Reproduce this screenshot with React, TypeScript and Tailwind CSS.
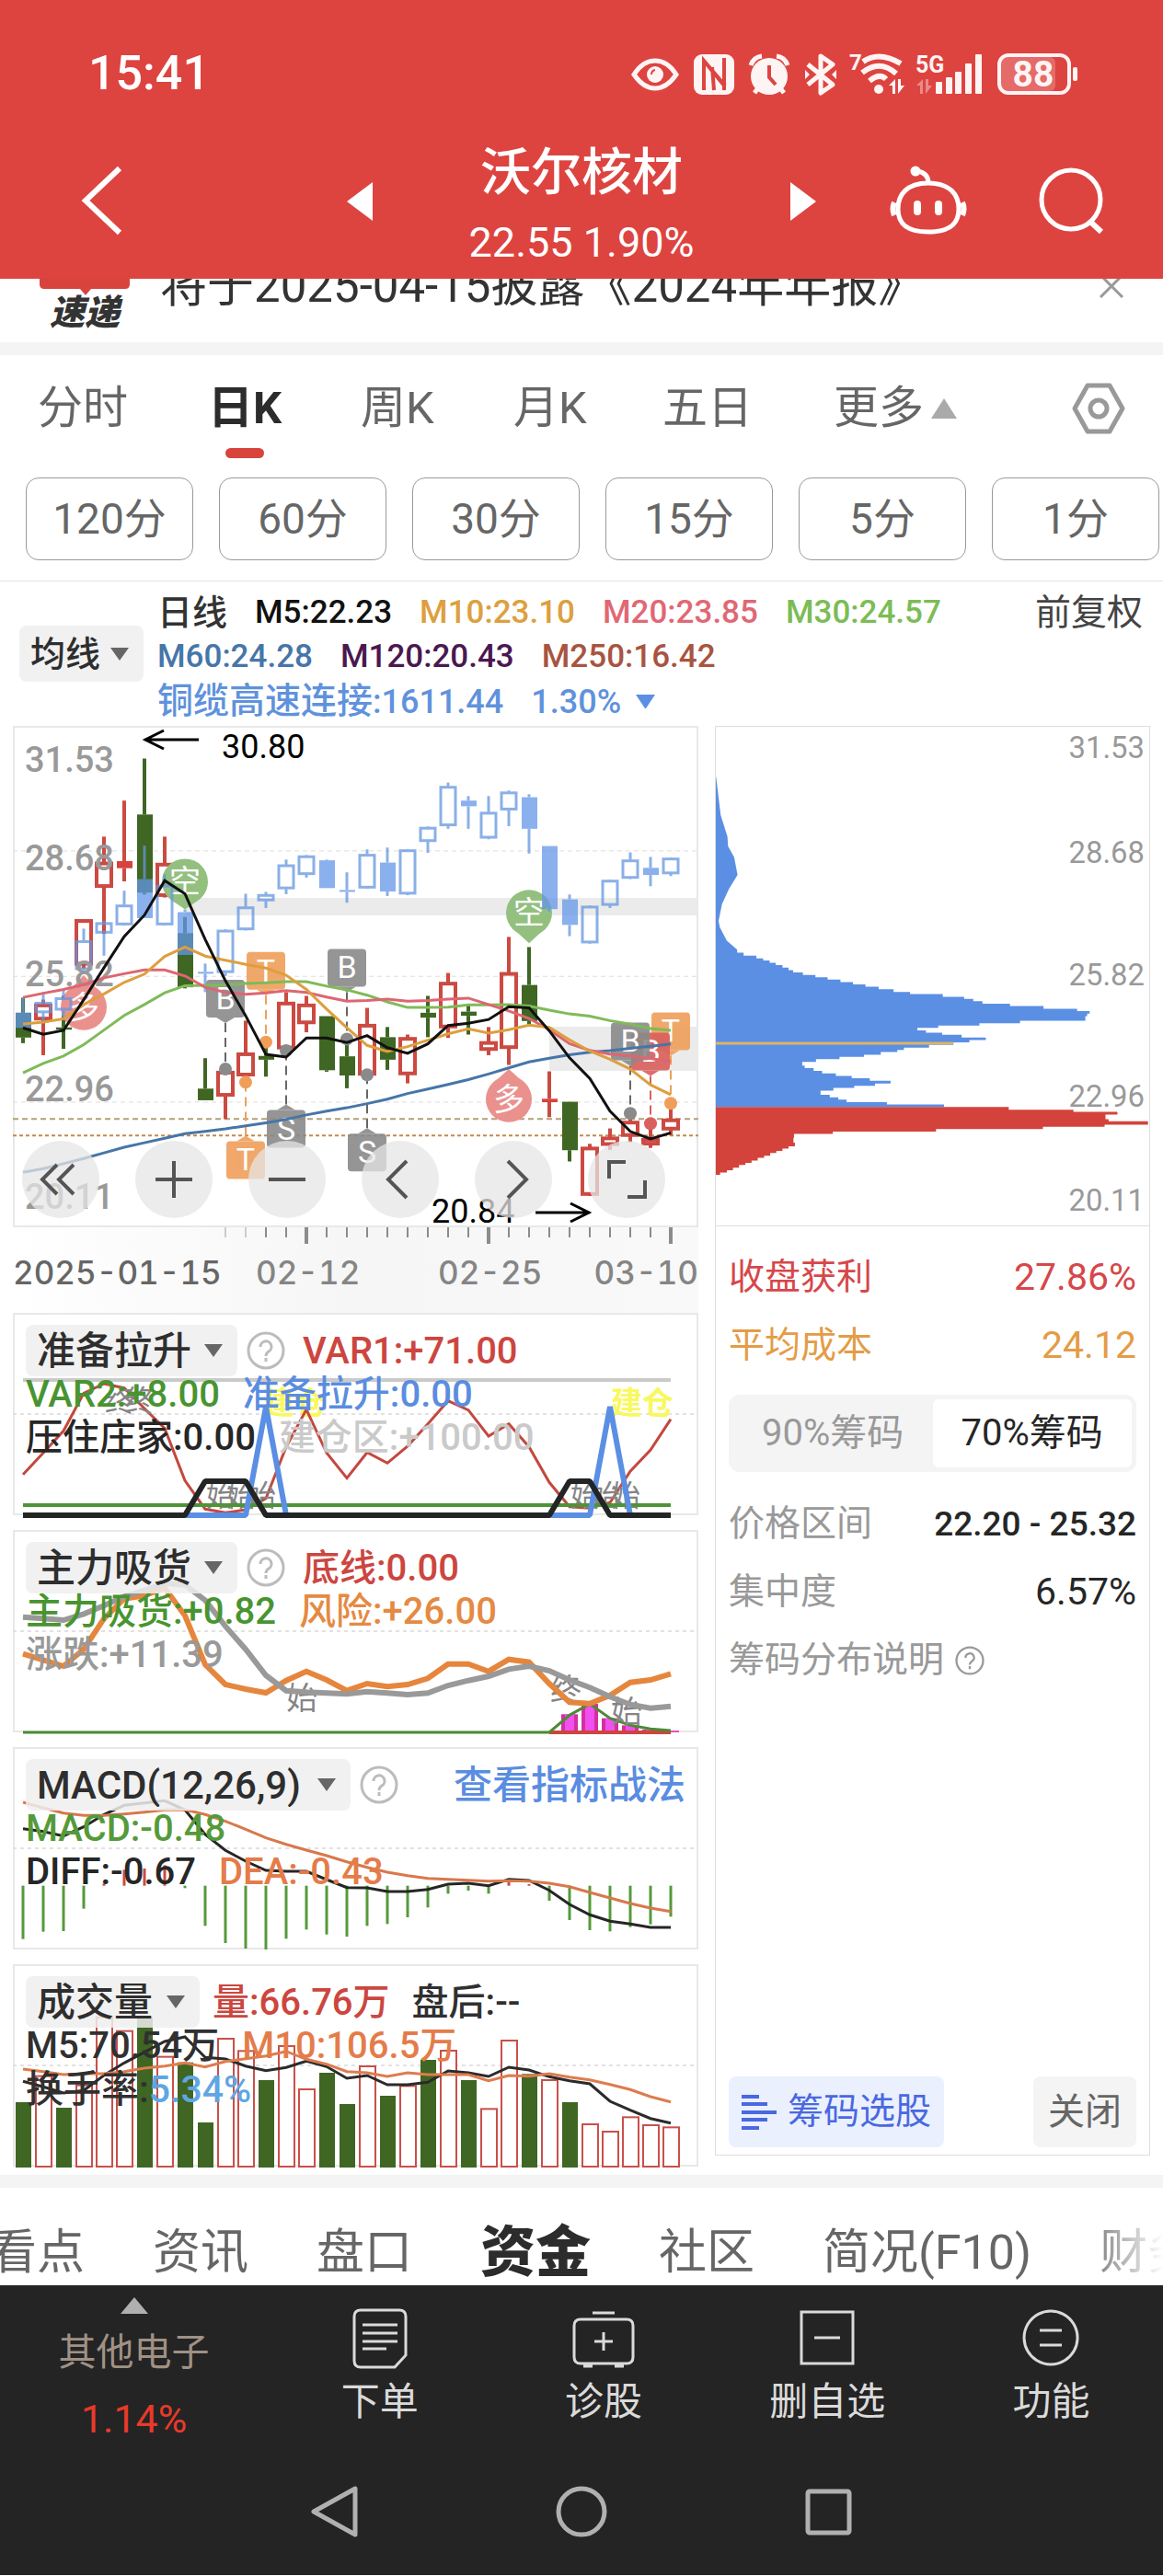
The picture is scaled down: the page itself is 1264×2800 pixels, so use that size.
import React from "react";

type Pt = number[];

const STEP = 22;
const X0 = 11;
const cx = (i: number) => X0 + i * STEP;

/* Samples of the price chart are stored at 2.45 units per pixel, those of the indicators at 3. */
const py = (v: number) => (v - 26) / 2.45;
const line = (vals: number[], y: (v: number) => number) =>
  vals.map((v, i) => `${cx(i)},${y(v).toFixed(1)}`).join(" ");

/* [index, high, top, bottom, low, kind] kind: 0 hollow, 1 filled down, 2 filled up */
const STOCK: Pt[] = [
  [0, 750, 790, 856, 871, 1], [1, 755, 768, 808, 903, 0], [2, 745, 829, 835, 886, 1], [3, 541, 543, 662, 672, 0],
  [4, 321, 390, 455, 580, 0], [5, 225, 386, 405, 440, 2], [6, 113, 262, 470, 475, 1], [7, 321, 393, 479, 483, 0],
  [8, 535, 578, 722, 725, 1], [9, 911, 992, 1023, 1023, 1], [10, 942, 947, 1011, 1073, 0], [11, 811, 898, 957, 978, 0],
  [12, 870, 905, 915, 960, 1], [13, 735, 763, 885, 893, 0], [14, 745, 768, 818, 842, 0], [15, 799, 799, 943, 947, 1],
  [16, 870, 906, 957, 991, 1], [17, 777, 822, 955, 957, 0], [18, 828, 855, 915, 942, 1], [19, 848, 857, 954, 978, 0],
  [20, 745, 790, 803, 855, 1], [21, 684, 710, 829, 857, 0], [22, 770, 787, 798, 848, 1], [23, 828, 868, 889, 903, 0],
  [24, 588, 684, 884, 929, 0], [25, 615, 716, 812, 820, 1], [26, 946, 1019, 1028, 1068, 2], [27, 1027, 1027, 1156, 1186, 1],
  [28, 1139, 1149, 1275, 1278, 0], [29, 1098, 1122, 1142, 1155, 0], [30, 1060, 1080, 1118, 1135, 0],
  [31, 1088, 1126, 1141, 1150, 0], [32, 1035, 1074, 1101, 1116, 0],
];
const SECTOR: Pt[] = [
  [0, 750, 790, 830, 830, 1], [1, 735, 762, 790, 812, 0], [2, 728, 750, 783, 802, 0], [3, 566, 598, 675, 680, 0],
  [4, 545, 550, 578, 638, 0], [5, 465, 503, 556, 558, 0], [6, 345, 434, 538, 538, 1], [7, 421, 450, 556, 558, 0],
  [8, 515, 522, 636, 636, 1], [9, 659, 681, 686, 735, 1], [10, 568, 570, 683, 692, 0], [11, 473, 508, 569, 571, 0],
  [12, 468, 475, 492, 511, 0], [13, 382, 396, 460, 474, 0], [14, 370, 372, 422, 430, 0], [15, 382, 384, 458, 458, 1],
  [16, 416, 463, 468, 497, 1], [17, 355, 368, 458, 460, 0], [18, 350, 390, 467, 479, 1], [19, 354, 356, 474, 477, 0],
  [20, 294, 296, 334, 364, 0], [21, 177, 187, 292, 300, 0], [22, 213, 225, 240, 300, 1], [23, 213, 256, 325, 328, 0],
  [24, 198, 202, 250, 293, 0], [25, 208, 216, 300, 366, 1], [26, 346, 346, 514, 520, 1], [27, 475, 488, 556, 586, 1],
  [28, 504, 506, 604, 606, 0], [29, 435, 437, 504, 511, 0], [30, 363, 383, 432, 434, 0], [31, 375, 404, 423, 453, 1],
  [32, 376, 378, 420, 426, 0],
];
const MA5 = [830, 847, 837, 755, 670, 587, 530, 438, 473, 595, 705, 798, 901, 908, 857, 857, 869, 851, 883, 898, 873, 824, 818, 808, 774, 777, 838, 910, 965, 1052, 1106, 1126, 1110];
const MA10 = [820, 815, 806, 768, 740, 709, 687, 640, 615, 639, 650, 661, 671, 690, 728, 780, 830, 877, 893, 880, 863, 846, 833, 844, 835, 823, 829, 862, 892, 914, 940, 982, 1008];
const MA20 = [749, 738, 728, 715, 697, 686, 676, 676, 692, 722, 736, 741, 737, 731, 736, 748, 759, 757, 754, 759, 757, 754, 751, 768, 785, 805, 835, 872, 890, 900, 905, 912, 920];
const MA30 = [950, 925, 905, 875, 836, 797, 768, 737, 718, 717, 716, 712, 710, 707, 707, 719, 729, 743, 761, 776, 776, 775, 769, 769, 768, 772, 783, 793, 799, 811, 820, 832, 837];
const MA60 = [1215, 1205, 1192, 1178, 1163, 1148, 1136, 1124, 1112, 1106, 1099, 1091, 1083, 1074, 1062, 1052, 1043, 1032, 1020, 1005, 993, 981, 968, 953, 937, 921, 911, 902, 895, 891, 885, 879, 873];

function Candle({ d, color, fill, w }: { d: Pt; color: string; fill: string; w: number }) {
  const [i, hi, top, bot, lo, kind] = d;
  const x = cx(i);
  return (
    <g stroke={color} strokeWidth={w}>
      {hi < top && <line x1={x} x2={x} y1={py(hi)} y2={py(top)} />}
      {lo > bot && <line x1={x} x2={x} y1={py(bot)} y2={py(lo)} />}
      {kind === 0 ? (
        <rect x={x - 8} y={py(top) + 1} width={16} height={Math.max(3, py(bot) - py(top) - 2)} fill="none" />
      ) : (
        <rect x={x - 8} y={py(top)} width={17} height={Math.max(2, py(bot) - py(top))} fill={fill} stroke="none" />
      )}
    </g>
  );
}

function Marker({ i, label, box, dot, color }: { i: number; label: string; box: number; dot: number; color: string }) {
  const x = cx(i);
  const above = box < dot;
  const yb = py(box);
  const edge = above ? yb + 41 : yb;
  const tip = above ? edge + 6 : edge - 6;
  return (
    <g>
      <line x1={x} x2={x} y1={tip} y2={py(dot)} stroke={color === "#8a8a8a" ? "#666" : color} strokeWidth={2} strokeDasharray="10 6" />
      <circle cx={x} cy={py(dot)} r={7} fill={color} />
      <g opacity={0.9}>
        <rect x={x - 21} y={yb} width={42} height={41} rx={4} fill={color} />
        <path d={`M${x - 10} ${edge}L${x} ${tip}L${x + 10} ${edge}Z`} fill={color} />
      </g>
      <text x={x} y={yb + 32} fontSize={34} fill="#fff" textAnchor="middle">{label}</text>
    </g>
  );
}

function Balloon({ i, y, tip, label, color }: { i: number; y: number; tip: number; label: string; color: string }) {
  const x = cx(i);
  const c = py(y);
  const t = py(tip);
  const s = t > c ? 1 : -1;
  return (
    <g>
      <circle cx={x} cy={c} r={25} fill={color} />
      <path d={`M${x - 13} ${c + s * 21}L${x} ${t}L${x + 13} ${c + s * 21}Z`} fill={color} />
      <text x={x} y={c + 12} fontSize={34} fill="#fff" textAnchor="middle">{label}</text>
    </g>
  );
}

const PRICES: [string, number][] = [["31.53", 113], ["28.68", 377], ["25.82", 685], ["22.96", 992], ["20.11", 1277]];
const GRAY = "#8a8a8a";
const ORANGE = "#ef9f5a";
const RED = "#cb4a42";

function PriceChart() {
  return (
    <svg viewBox="0 0 745 545" className="block h-auto w-full">
      <rect x={1} y={1} width={743} height={543} fill="#fff" stroke="#e8e8e8" strokeWidth={2} />
      <rect x={188} y={py(484)} width={556} height={19} fill="#ebebeb" />
      <rect x={583} y={py(827)} width={161} height={48} fill="#ebebeb" />
      {[359, 693, 1028].map((v) => (
        <line key={v} x1={0} x2={745} y1={py(v)} y2={py(v)} stroke="#dedede" strokeDasharray="5 4" />
      ))}
      <line x1={0} x2={745} y1={py(1073)} y2={py(1073)} stroke="#b3a076" strokeWidth={2} strokeDasharray="6 4" />
      <line x1={0} x2={745} y1={py(1117)} y2={py(1117)} stroke="#c08a50" strokeWidth={2} strokeDasharray="4 3" />
      {STOCK.map((d) => (
        <Candle key={d[0]} d={d} w={4} color={d[5] === 1 ? "#3f6622" : RED} fill={d[5] === 1 ? "#3f6622" : "#d8423c"} />
      ))}
      <Balloon i={8} y={441} tip={515} label="空" color="#93c07f" />
      <Balloon i={25} y={524} tip={605} label="空" color="#93c07f" />
      <Balloon i={3} y={775} tip={690} label="多" color="#ea918e" />
      <Balloon i={24} y={1020} tip={940} label="多" color="#ea918e" />
      <g opacity={0.75}>
        {SECTOR.map((d) => <Candle key={d[0]} d={d} w={3} color="#6496e0" fill="#6496e8" />)}
      </g>
      <Marker i={10} label="B" box={702} dot={940} color={GRAY} />
      <Marker i={12} label="T" box={628} dot={868} color={ORANGE} />
      <Marker i={13} label="S" box={1049} dot={891} color={GRAY} />
      <Marker i={11} label="T" box={1132} dot={975} color={ORANGE} />
      <Marker i={16} label="B" box={620} dot={860} color={GRAY} />
      <Marker i={17} label="S" box={1112} dot={955} color={GRAY} />
      <Marker i={32} label="T" box={789} dot={1031} color={ORANGE} />
      <Marker i={31} label="B" box={843} dot={1085} color="#d9605c" />
      <Marker i={30} label="B" box={816} dot={1058} color={GRAY} />
      <g fontSize={38} fontWeight={500} fill="#999">
        {PRICES.map(([t, v]) => <text key={t} x={13} y={py(v) + 14}>{t}</text>)}
      </g>
      <g fill="none" strokeWidth={3}>
        <polyline points={line(MA60, py)} stroke="#4676a8" />
        <polyline points={line(MA30, py)} stroke="#7fbb58" />
        <polyline points={line(MA20, py)} stroke="#dd6672" />
        <polyline points={line(MA10, py)} stroke="#dd9f3e" />
        <polyline points={line(MA5, py)} stroke="#111" />
      </g>
      <g stroke="#000" strokeWidth={3} fill="none">
        <path d="M202 15H143M164 5L144 15L164 25" />
        <path d="M568 529H627M606 519L626 529L606 539" />
      </g>
      <g fontSize={36} fill="#000">
        <text x={227} y={35}>30.80</text>
        <text x={455} y={540}>20.84</text>
      </g>
    </svg>
  );
}

function ChartControls() {
  const items: [string, React.ReactNode][] = [
    ["快退", <path key="a" d="M38 26L22 42L38 58M56 26L40 42L56 58" />],
    ["放大", <path key="b" d="M42 22V62M22 42H62" />],
    ["缩小", <path key="c" d="M22 42H62" />],
    ["左移", <path key="d" d="M49 22L29 42L49 62" />],
    ["右移", <path key="e" d="M36 22L56 42L36 62" />],
    ["全屏", <path key="f" d="M23 41V23H41M62 43V61H43" />],
  ];
  return (
    <div className="absolute right-0 bottom-[10px] left-[10px] flex gap-[39px]">
      {items.map(([name, icon]) => (
        <button key={name} aria-label={name} className="size-[84px] rounded-full bg-[#e6e6e6]/75">
          <svg viewBox="0 0 84 84" fill="none" stroke="#555" strokeWidth={4} className="size-full">{icon}</svg>
        </button>
      ))}
    </div>
  );
}

function TimeAxis() {
  return (
    <div className="h-[93px] bg-linear-to-r from-white via-[#f6f6f6] to-[#f9f9f9]">
      <svg viewBox="0 0 745 18" className="block h-auto w-full">
        {Array.from({ length: 23 }, (_, k) => k + 10).map((i) => {
          const big = i === 14 || i === 23 || i === 32;
          return <line key={i} x1={cx(i)} x2={cx(i)} y1={0} y2={big ? 18 : 11} stroke={i < 12 ? "#ccc" : "#8c8c8c"} strokeWidth={big ? 4 : 2} />;
        })}
      </svg>
      <div className="flex [font-family:Inter,sans-serif] text-[35px] leading-[62px] font-medium whitespace-nowrap text-[#858585] tabular-nums">
        <span className="w-[264px] shrink-0 text-[#666]">2025-01-15</span>
        <span className="w-[198px] shrink-0">02-12</span>
        <span className="flex-1">02-25</span>
        <span>03-10</span>
      </div>
    </div>
  );
}

const DIST_TOP: Pt[] = [[53, 160], [68, 262], [90, 320], [92, 345], [112, 375], [123, 422], [95, 460], [72, 500], [61, 545], [65, 562], [88, 598], [122, 622]];
const DIST_MID: Pt[] = [[143, 630], [185, 638], [207, 645], [228, 651], [248, 657], [270, 663], [290, 670], [305, 677], [337, 683], [378, 690], [418, 696], [460, 702], [501, 709], [542, 715], [585, 721], [634, 728], [688, 735], [795, 741], [865, 748], [895, 754], [925, 760], [1015, 767], [1125, 773], [1235, 780], [1276, 786], [1268, 793], [1262, 800], [1262, 806], [1048, 812], [915, 819], [780, 825], [712, 831], [740, 838], [793, 844], [857, 850], [936, 857], [882, 864], [830, 870], [750, 877], [668, 884], [646, 890], [592, 896], [537, 903], [457, 909], [380, 915], [335, 922], [343, 932], [372, 939], [400, 946], [445, 953], [497, 960], [556, 966], [624, 973], [573, 980], [505, 986], [437, 992], [395, 999], [425, 1010], [453, 1017], [480, 1023], [612, 1030], [799, 1036]];
const DIST_RED: Pt[] = [[1011, 1043], [1223, 1050], [1367, 1056], [1328, 1063], [1338, 1075], [1467, 1081], [1325, 1090], [1123, 1096], [773, 1102], [435, 1109], [308, 1115], [306, 1125], [311, 1138], [290, 1148], [270, 1154], [250, 1160], [230, 1166], [210, 1173], [189, 1179], [169, 1186], [149, 1192], [128, 1198], [108, 1205], [88, 1212], [66, 1218]];
const dx = (v: number) => ((v - 52) / 3).toFixed(1);
const dy = (v: number) => py(v).toFixed(1);
const steps = (pts: Pt[]) => pts.map(([x, y]) => `V${dy(y)}H${dx(x)}`).join("");

function ChipChart() {
  return (
    <svg viewBox="0 0 473 544" className="block h-auto w-full">
      <path d={`M${DIST_TOP.map(([x, y]) => `${dx(x)} ${dy(y)}`).join("L")}${steps(DIST_MID)}V${dy(1043)}H0V${dy(160)}Z`} fill="#5a8fe4" />
      <path d={`M0 ${dy(1043)}${steps(DIST_RED)}V${dy(1224)}H0Z`} fill="#d3433b" />
      <rect x={0} y={344} width={259} height={3} fill="#dcb468" />
      <g fontSize={33} fill="#999" textAnchor="end">
        {PRICES.map(([t], k) => (
          <text key={t} x={468} y={py([81, 361, 687, 1012, 1292][k]) + 12}>{t}</text>
        ))}
      </g>
    </svg>
  );
}

function Help({ big }: { big?: boolean }) {
  return (
    <button aria-label="说明" className={big ? "size-[42px] shrink-0 text-[#bcbcbc]" : "size-[32px] shrink-0 text-[#999]"}>
      <svg viewBox="0 0 42 42" className="size-full" fill="none" stroke="currentColor" strokeWidth={3}>
        <circle cx={21} cy={21} r={19} />
        <path d="M15 17a6 6 0 1 1 9 5q-3 2-3 5M21 29v4" />
      </svg>
    </button>
  );
}

function Drop({ label, className }: { label: string; className: string }) {
  return (
    <div className={`relative flex shrink-0 items-center ${className}`}>
      <select aria-label={label} className="h-full w-full appearance-none rounded-lg bg-[#efefef]/85 pl-3 font-medium text-[#2e2e2e]">
        <option>{label}</option>
      </select>
      <svg viewBox="0 0 20 14" className="pointer-events-none absolute right-4 w-[20px]" fill="#666"><path d="M0 0H20L10 14Z" /></svg>
    </div>
  );
}

type Val = [string, string];
function Panel({ name, width, help, row1, rows, link, children }: {
  name: string; width: string; help?: boolean; row1: Val[]; rows: Val[][]; link?: string; children: React.ReactNode;
}) {
  return (
    <section className="grid">
      <svg viewBox="0 0 745 220" className="block h-auto w-full overflow-visible [grid-area:1/1]">
        <rect x={1} y={1} width={743} height={218} fill="#fff" stroke="#e8e8e8" strokeWidth={2} />
        <line x1={0} x2={745} y1={110} y2={110} stroke="#e2e2e2" strokeWidth={2} strokeDasharray="4 4" />
        {children}
      </svg>
      <div className="z-10 px-[14px] pt-[13px] text-[40px] leading-[47px] font-medium whitespace-nowrap [grid-area:1/1]">
        <div className="flex h-[56px] items-center gap-[10px]">
          <Drop label={name} className={`h-[56px] text-[42px] ${width}`} />
          {help && <Help big />}
          <div className={help ? "ml-[9px] flex gap-6" : "ml-1 flex gap-6"}>
            {row1.map(([t, c]) => <span key={t} className={c}>{t}</span>)}
          </div>
          {link && <a href="#guide" className="ml-auto text-[42px] text-[#5a8de0]">{link}</a>}
        </div>
        <div className="-mt-1">
          {rows.map((r, k) => (
            <div key={k} className="flex h-[47px] items-center gap-[25px]">
              {r.map(([t, c]) => <span key={t} className={c}>{t}</span>)}
            </div>
          ))}
        </div>
      </div>
    </section>
  );
}

const G = "text-[#489430]";
const K = "text-[#262626]";
const R = "text-[#cc463f]";

const y1 = (v: number) => (v - 53) / 3;
const y2 = (v: number) => (v - 761) / 3;
const y3 = (v: number) => (v - 60) / 3;
const y4 = (v: number) => (v - 768) / 3;

const VAR1 = [580, 510, 438, 315, 284, 298, 365, 430, 600, 693, 705, 695, 658, 490, 368, 510, 592, 508, 543, 488, 415, 340, 370, 455, 415, 490, 606, 685, 690, 672, 570, 500, 400];
const RISE = [1045, 1050, 1055, 1035, 1008, 978, 958, 935, 940, 990, 1075, 1150, 1235, 1285, 1290, 1293, 1296, 1288, 1293, 1298, 1293, 1268, 1252, 1238, 1215, 1205, 1220, 1250, 1275, 1305, 1330, 1342, 1336];
const RISK = [1165, 1185, 1205, 1150, 1050, 985, 975, 950, 1040, 1200, 1265, 1280, 1292, 1252, 1222, 1250, 1285, 1262, 1272, 1265, 1245, 1198, 1198, 1222, 1183, 1192, 1262, 1323, 1327, 1300, 1258, 1250, 1230];
const DIFF = [326, 335, 350, 320, 280, 250, 242, 235, 265, 345, 397, 432, 462, 465, 465, 492, 518, 519, 531, 531, 524, 507, 504, 512, 491, 495, 527, 573, 607, 628, 637, 648, 648];
const DEA = [240, 258, 275, 283, 283, 278, 272, 265, 264, 280, 302, 328, 356, 377, 396, 414, 434, 452, 468, 479, 488, 491, 494, 497, 496, 497, 504, 515, 534, 552, 570, 585, 596];
const HIST = [686, 662, 660, 587, 505, 460, 456, 445, 520, 643, 699, 717, 720, 685, 655, 671, 678, 643, 637, 615, 583, 538, 528, 538, 500, 507, 561, 624, 657, 661, 647, 638, 613];
const VOL = [-1218, 1130, -1236, 1160, 938, 983, -940, 1067, -1088, -1284, 1008, 1048, -1146, 1032, 1173, -1122, -1224, 1098, -1197, 1162, -1080, 1047, -1146, 1237, 1014, -1126, 1143, -1218, 1287, 1311, 1264, 1290, 1297];
const V5 = [1150, 1168, 1188, 1180, 1130, 1090, 1055, 1020, 1005, 1072, 1077, 1100, 1115, 1105, 1084, 1102, 1140, 1131, 1161, 1161, 1153, 1116, 1122, 1134, 1104, 1113, 1135, 1148, 1158, 1215, 1244, 1271, 1286];
const V10 = [1110, 1118, 1128, 1125, 1125, 1118, 1107, 1100, 1090, 1103, 1085, 1076, 1067, 1052, 1078, 1094, 1118, 1122, 1134, 1122, 1128, 1128, 1128, 1148, 1131, 1133, 1125, 1136, 1145, 1160, 1177, 1200, 1217];

function Indicators() {
  return (
    <div className="flex flex-col gap-4">
      <Panel name="准备拉升" width="w-[230px]" help row1={[["VAR1:+71.00", R]]}
        rows={[[["VAR2:+8.00", G], ["准备拉升:0.00", "text-[#5a8de0]"]], [["压住庄家:0.00", K], ["建仓区:+100.00", "text-[#cacaca]"]]]}>
        <line x1={11} x2={715} y1={73} y2={73} stroke="#cacaca" strokeWidth={4} />
        <g fontSize={34} fill="#f8f860" fontWeight={700}>
          <text x={272} y={110}>建仓</text><text x={650} y={110}>建仓</text>
        </g>
        <polyline points={line(VAR1, y1)} fill="none" stroke="#c4483f" strokeWidth={3} />
        <g fontSize={32} fill="#858585">
          <text x={100} y={107}>终</text><text x={122} y={107}>终</text>
          <text x={210} y={210}>始</text><text x={232} y={210}>始</text><text x={254} y={210}>始</text>
          <text x={606} y={210}>始</text><text x={628} y={210}>始</text><text x={650} y={210}>始</text>
        </g>
        <line x1={11} x2={715} y1={209} y2={209} stroke="#4d9438" strokeWidth={4} />
        <g fill="none" strokeWidth={6} strokeLinejoin="bevel">
          <path d="M11 220H253L275 102L297 220H627L649 102L671 220H715" stroke="#5a8fe4" />
          <path d="M11 220H187L209 183H253L275 220H583L605 183H627L649 220H715" stroke="#222426" />
        </g>
      </Panel>
      <Panel name="主力吸货" width="w-[230px]" help row1={[["底线:0.00", R]]}
        rows={[[["主力吸货:+0.82", G], ["风险:+26.00", "text-[#e48a42]"]], [["涨跌:+11.39", "text-[#999]"]]]}>
        {[[27, 1362], [28, 1328], [29, 1375], [30, 1398], [31, 1412]].map(([i, v]) => (
          <g key={i}>
            <rect x={cx(i) - 9} y={y2(v)} width={18} height={220 - y2(v)} fill="#d62ea0" />
            <rect x={cx(i) - 5} y={y2(v)} width={10} height={220 - y2(v)} fill="#f050f0" />
          </g>
        ))}
        <line x1={583} x2={715} y1={220} y2={220} stroke="#cc463f" strokeWidth={4} />
        <line x1={715} x2={724} y1={219} y2={219} stroke="#e050d0" strokeWidth={2} />
        <polyline points={`11,220 583,220 605,${y2(1365)} 627,${y2(1328)} 649,${y2(1375)} 671,${y2(1398)} 693,${y2(1410)} 715,${y2(1415)}`} fill="none" stroke="#4b8b35" strokeWidth={3} />
        <g fontSize={34} fill="#858585">
          <text x={297} y={195}>始</text><text x={584} y={186}>终</text><text x={650} y={210}>始</text>
        </g>
        <polyline points={line(RISK, y2)} fill="none" stroke="#e6863c" strokeWidth={6} />
        <polyline points={line(RISE, y2)} fill="none" stroke="#999" strokeWidth={6} />
      </Panel>
      <Panel name="MACD(12,26,9)" width="w-[353px]" help row1={[]} link="查看指标战法"
        rows={[[["MACD:-0.48", "text-[#559a3a]"]], [["DIFF:-0.67", K], ["DEA:-0.43", "text-[#e47c4a]"]]]}>
        {HIST.map((v, i) => (
          <line key={i} x1={cx(i)} x2={cx(i)} y1={y3(512)} y2={y3(v)} stroke={v < 512 ? RED : "#559a3a"} strokeWidth={3} />
        ))}
        <polyline points={line(DIFF, y3)} fill="none" stroke="#262626" strokeWidth={3} />
        <polyline points={line(DEA, y3)} fill="none" stroke="#d8784c" strokeWidth={3} />
      </Panel>
      <Panel name="成交量" width="w-[189px]" row1={[["量:66.76万", R], ["盘后:--", "text-[#303030]"]]}
        rows={[[["M5:70.54万", "text-[#303030]"], ["M10:106.5万", "text-[#e47c4a]"]]]}>
        {VOL.map((v, i) =>
          v < 0 ? (
            <rect key={i} x={cx(i) - 8} y={y4(-v)} width={17} height={221 - y4(-v)} fill="#3f6622" />
          ) : (
            <rect key={i} x={cx(i) - 8} y={y4(v) + 1} width={17} height={219 - y4(v)} fill="#fff" stroke="#c9504a" strokeWidth={2} />
          ),
        )}
        <polyline points={line(V5, y4)} fill="none" stroke="#2b2b2b" strokeWidth={3} />
        <polyline points={line(V10, y4)} fill="none" stroke="#de7c4e" strokeWidth={3} />
        <text x={14} y={150} fontSize={41} fontWeight={500} fill="#303030">换手率:<tspan fill="#5fa6e2">5.34%</tspan></text>
      </Panel>
    </div>
  );
}

function StatusIcons() {
  return (
    <svg viewBox="0 0 488 50" className="h-[50px] w-[488px]" fill="#fff4f4">
      <g fill="none" stroke="#fff4f4" strokeWidth={5}>
        <path d="M3 26C12 12 21 11 26 11S40 12 49 26C40 39 31 41 26 41S12 39 3 26Z" />
      </g>
      <circle cx={26} cy={26} r={9} />
      <path d="M22 26q0-4 4-5" stroke="#dd4440" strokeWidth={2} fill="none" />
      <rect x={68} y={4} width={44} height={44} rx={9} />
      <path d="M79 43V11L102 38M88 18L90 43M101 43V8M79 11l22 27" stroke="#dd4440" strokeWidth={4} fill="none" />
      <circle cx={150} cy={28} r={20} />
      <path d="M134 46l6-8M166 46l-6-8" stroke="#fff4f4" strokeWidth={5} />
      <path d="M130 16q3-9 12-10M158 6q9 1 12 10" stroke="#fff4f4" strokeWidth={5} fill="none" />
      <path d="M150 16v13l7 8" stroke="#dd4440" strokeWidth={4} fill="none" />
      <path d="M192 15L219 37L206 46V6L219 15L192 37" stroke="#fff4f4" strokeWidth={5} fill="none" strokeLinejoin="round" />
      <path d="M189 21l5 5l-5 5zM223 21l-5 5l5 5z" />
      <text x={237} y={21} fontSize={24} fontWeight={700}>7</text>
      <g fill="none" stroke="#fff4f4" strokeWidth={6}>
        <path d="M252 12Q269 0 293 14M251 24Q270 9 288 25M259 33Q270 24 277 31" />
      </g>
      <circle cx={269} cy={42} r={5} />
      <path d="M280 38l7-7v16h-3v-9zM290 31v16l7-9h-4v-7z" />
      <text x={309} y={24} fontSize={25} fontWeight={700}>5G</text>
      <path d="M310 38l7-7v16h-3v-9zM320 31v16l7-9h-4v-7z" opacity={0.4} />
      <rect x={331} y={34} width={7} height={13} rx={1} />
      <rect x={342} y={29} width={7} height={18} rx={1} />
      <rect x={352} y={23} width={7} height={24} rx={1} />
      <rect x={363} y={14} width={7} height={33} rx={1} />
      <rect x={374} y={4} width={7} height={43} rx={1} />
      <rect x={401} y={7} width={60} height={37} rx={6} opacity={0.22} />
      <rect x={400} y={5} width={76} height={41} rx={10} fill="none" stroke="#fff4f4" strokeWidth={4} />
      <rect x={480} y={18} width={5} height={15} rx={2} />
      <text x={437} y={39} fontSize={39} fontWeight={700} textAnchor="middle">88</text>
    </svg>
  );
}

function Header() {
  return (
    <header className="flex h-[303px] flex-col bg-[#dd4440] text-white">
      <div className="flex h-[160px] items-center justify-between pr-[90px] pl-[96px]">
        <span className="text-[52px] font-medium">15:41</span>
        <StatusIcons />
      </div>
      <div className="grid flex-1 grid-cols-[1fr_510px_1fr] items-start">
        <button aria-label="返回" className="mt-5 ml-[86px] justify-self-start">
          <svg viewBox="0 0 50 76" className="h-[76px] w-[50px]" fill="none" stroke="#fff" strokeWidth={6}><path d="M44 3L7 38L44 73" /></svg>
        </button>
        <div className="flex items-start justify-between">
          <button aria-label="上一只" className="mt-[38px]"><svg viewBox="0 0 28 42" className="h-[42px] w-[28px]" fill="#fff"><path d="M28 0V42L0 21Z" /></svg></button>
          <div className="-mt-2 text-center whitespace-nowrap">
            <h1 className="text-[55px] leading-[70px] font-medium">沃尔核材</h1>
            <p className="mt-[7px] text-[45px] leading-[70px]">22.55 1.90%</p>
          </div>
          <button aria-label="下一只" className="mt-[38px]"><svg viewBox="0 0 28 42" className="h-[42px] w-[28px]" fill="#fff"><path d="M0 0V42L28 21Z" /></svg></button>
        </div>
        <div className="mt-5 flex justify-end gap-[75px] pr-[62px]">
          <button aria-label="智能助手">
            <svg viewBox="0 0 84 76" className="h-[76px] w-[84px]" fill="none" stroke="#fff" strokeWidth={5}>
              <path d="M42 19C66 19 75 32 75 47S67 72 42 72S9 62 9 47S18 19 42 19ZM42 19Q42 8 30 6" />
              <path d="M5 40q-3 7 0 14M79 40q3 7 0 14" strokeWidth={6} />
              <path d="M30 42v8M53 42v8" strokeWidth={8} strokeLinecap="round" />
              <circle cx={28} cy={6} r={3} fill="#fff" />
            </svg>
          </button>
          <button aria-label="搜索">
            <svg viewBox="0 0 76 76" className="h-[76px] w-[76px]" fill="none" stroke="#fff" strokeWidth={5}>
              <circle cx={38} cy={37} r={32} /><path d="M58 60L71 72" strokeWidth={6} />
            </svg>
          </button>
        </div>
      </div>
    </header>
  );
}

function Notice() {
  return (
    <div className="h-[69px] overflow-hidden">
      <div className="-mt-10 flex h-[96px] items-center text-[#333]">
        <div className="ml-[43px] flex w-[98px] flex-col items-center self-end">
          <svg viewBox="0 0 98 54" className="w-[98px]" fill="#d8443c"><path d="M0 0H98V42Q98 47 93 47H56L50 54L44 47H5Q0 47 0 42Z" /></svg>
          <span className="text-[38px] leading-[38px] font-black italic">速递</span>
        </div>
        <p className="ml-[33px] flex-1 text-[51px] whitespace-nowrap">将于2025-04-15披露《2024年年报》</p>
        <button aria-label="关闭公告" className="mr-[43px]">
          <svg viewBox="0 0 26 26" className="size-[26px]" stroke="#999" strokeWidth={3}><path d="M1 1L25 25M25 1L1 25" /></svg>
        </button>
      </div>
    </div>
  );
}

function PeriodTabs() {
  const tab = "h-[60px] text-left whitespace-nowrap";
  return (
    <nav className="flex items-start pt-[28px] pl-[41px] text-[49px] leading-[60px] text-[#666]">
      <button className={`${tab} w-[185px]`}>分时</button>
      <div className="w-[166px]">
        <button className={`${tab} block font-bold text-[#2c2c2c]`}>日K</button>
        <div className="mt-[13px] ml-[19px] h-[11px] w-[42px] rounded-full bg-[#d8443c]" />
      </div>
      <button className={`${tab} w-[166px]`}>周K</button>
      <button className={`${tab} w-[162px]`}>月K</button>
      <button className={`${tab} w-[186px]`}>五日</button>
      <button className={`${tab} flex items-center gap-2`}>
        更多
        <svg viewBox="0 0 28 22" className="w-[28px]" fill="#aaa"><path d="M14 0L28 22H0Z" /></svg>
      </button>
      <button aria-label="设置" className="mr-[41px] ml-auto">
        <svg viewBox="0 0 58 56" className="h-[60px] w-[58px]" fill="none" stroke="#999" strokeWidth={5} strokeLinejoin="round">
          <path d="M17 3H41L55 28L41 53H17L3 28Z" /><circle cx={29} cy={28} r={9} />
        </svg>
      </button>
    </nav>
  );
}

function Legend() {
  return (
    <div className="flex h-[158px] items-start border-t border-[#e5e5e5] pt-[10px] text-[35px] leading-[48px] font-medium whitespace-nowrap">
      <Drop label="均线" className="mt-[38px] ml-[21px] h-[61px] w-[135px] text-[38px]" />
      <div className="ml-[15px] flex-1">
        <div className="flex gap-[30px]">
          <span className="text-[38px] text-[#333]">日线</span>
          <span className="text-[#111]">M5:22.23</span>
          <span className="text-[#dca040]">M10:23.10</span>
          <span className="text-[#e06874]">M20:23.85</span>
          <span className="text-[#7cbc56]">M30:24.57</span>
        </div>
        <div className="flex gap-[30px]">
          <span className="text-[#4676a8]">M60:24.28</span>
          <span className="text-[#4a1850]">M120:20.43</span>
          <span className="text-[#a85440]">M250:16.42</span>
        </div>
        <div className="flex items-center gap-[30px] text-[36px] text-[#5f92dc]">
          <span><span className="text-[39px]">铜缆高速连接</span>:1611.44</span>
          <span className="flex items-center gap-4">1.30%
            <svg viewBox="0 0 20 15" className="w-[21px]" fill="#5a8fe4"><path d="M0 0H20L10 15Z" /></svg>
          </span>
        </div>
      </div>
      <button className="mr-[22px] text-[39px] font-normal text-[#444]">前复权</button>
    </div>
  );
}

function ChipPanel() {
  const row = "flex h-[74px] items-center justify-between";
  return (
    <aside className="flex flex-col self-start border border-[#dedede] max-lg:h-auto lg:h-[1554px]">
      <div className="border-b border-[#dedede]"><ChipChart /></div>
      <div className="flex flex-1 flex-col px-[14px] pt-[19px] pb-2 text-[39px] text-[#999]">
        <div className={`${row} text-[#d6474a]`}><span>收盘获利</span><span className="text-[41px]">27.86%</span></div>
        <div className={`${row} text-[#e49c46]`}><span>平均成本</span><span className="text-[41px]">24.12</span></div>
        <div className="mt-[16px] mb-[20px] grid h-[84px] grid-cols-2 rounded-xl bg-[#f4f4f4] p-[5px] text-[40px]">
          <button>90%筹码</button>
          <button className="rounded-md bg-white text-[#262626]">70%筹码</button>
        </div>
        <div className={row}><span>价格区间</span><span className="text-[37px] font-medium text-[#262626]">22.20 - 25.32</span></div>
        <div className={row}><span>集中度</span><span className="text-[41px] text-[#262626]">6.57%</span></div>
        <div className="flex h-[74px] items-center gap-3">筹码分布说明<Help /></div>
        <div className="mt-auto flex justify-between">
          <button className="flex h-[77px] items-center gap-3 rounded-lg bg-[#eaf0fe] px-[14px] text-[#4a68e0]">
            <svg viewBox="0 0 38 38" className="w-[38px]" fill="#4a68e0">
              <path d="M0 0H19V4H0ZM0 8H28V12H0ZM0 17H38V21H0ZM0 25H28V29H0ZM0 34H19V38H0Z" />
            </svg>
            筹码选股
          </button>
          <button className="h-[77px] rounded-lg bg-[#f4f4f4] px-4 text-[40px] text-[#666]">关闭</button>
        </div>
      </div>
    </aside>
  );
}

function BottomNav() {
  const items: [string, React.ReactNode][] = [
    ["下单", <path key="a" d="M11 3H53Q60 3 60 10V52L48 65H11Q4 65 4 58V10Q4 3 11 3ZM13 19H51M13 28H51M13 37H51M13 45H39" />],
    ["诊股", <path key="b" d="M7 13H57Q64 13 64 20V54Q64 61 57 61H7Q0 61 0 54V20Q0 13 7 13ZM20 6H44M32 27V47M22 37H42M10 64H20M44 64H54" />],
    ["删自选", <path key="c" d="M4 5H60V61H4ZM18 33H46" />],
    ["功能", <path key="d" d="M32 4a29 29 0 1 0 .1 0ZM20 25H44M20 41H44" />],
  ];
  return (
    <footer className="bg-[#242424]">
      <div className="grid h-[180px] grid-cols-[291fr_243fr_243fr_243fr_243fr]">
        <button className="flex flex-col items-center pt-[13px] text-[41px] text-[#a09184]">
          <svg viewBox="0 0 30 18" className="w-[30px]" fill="#b0b0b0"><path d="M15 0L30 18H0Z" /></svg>
          <span className="mt-[12px] leading-[60px]">其他电子</span>
          <span className="mt-[12px] text-[43px] leading-[60px] text-[#e83a2a]">1.14%</span>
        </button>
        {items.map(([name, icon]) => (
          <button key={name} className="flex flex-col items-center pt-[24px] text-[42px] leading-[60px] text-[#dadada]">
            <svg viewBox="-2 0 68 68" className="size-[68px]" fill="none" stroke="#dadada" strokeWidth={3}>{icon}</svg>
            <span className="mt-[5px]">{name}</span>
          </button>
        ))}
      </div>
      <div className="flex h-[135px] items-center justify-center gap-[212px] pb-1">
        <button aria-label="后退"><svg viewBox="0 0 56 60" className="w-[56px]" fill="none" stroke="#b0b0b0" strokeWidth={5} strokeLinejoin="round"><path d="M50 5V55L5 30Z" /></svg></button>
        <button aria-label="主页"><svg viewBox="0 0 56 56" className="w-[56px]" fill="none" stroke="#b0b0b0" strokeWidth={5}><circle cx={28} cy={28} r={25} /></svg></button>
        <button aria-label="最近任务"><svg viewBox="0 0 56 56" className="w-[56px]" fill="none" stroke="#b0b0b0" strokeWidth={5}><rect x={6} y={6} width={45} height={45} rx={2} /></svg></button>
      </div>
    </footer>
  );
}

export default function App() {
  return (
    <div className="overflow-x-hidden bg-white [font-family:Roboto,'Noto_Sans_CJK_SC',sans-serif]">
      <Header />
      <Notice />
      <div className="h-[14px] bg-[#f4f4f4]" />
      <PeriodTabs />
      <div className="mt-[21px] mb-[22px] flex gap-[28px] overflow-hidden pl-[28px]">
        {["120分", "60分", "30分", "15分", "5分", "1分"].map((t) => (
          <button key={t} className="h-[90px] w-[182px] shrink-0 rounded-[14px] border border-[#999] text-[46px] text-[#666]">{t}</button>
        ))}
      </div>
      <Legend />
      <main className="grid grid-cols-[745fr_473fr] gap-[18px] px-[14px] pb-[9px]">
        <div>
          <div className="relative">
            <PriceChart />
            <ChartControls />
          </div>
          <TimeAxis />
          <Indicators />
        </div>
        <ChipPanel />
      </main>
      <div className="h-[14px] bg-[#f4f4f4]" />
      <nav className="relative h-[106px] overflow-hidden">
        <div className="-ml-3 flex h-[142px] items-center gap-[74px] text-[52px] whitespace-nowrap text-[#666]">
          <button>看点</button>
          <button>资讯</button>
          <button>盘口</button>
          <button className="text-[60px] font-black text-[#2c2c2c]">资金</button>
          <button>社区</button>
          <button>简况(F10)</button>
          <button>财务</button>
        </div>
        <div className="pointer-events-none absolute inset-y-0 right-0 w-[90px] bg-linear-to-r from-white/0 to-white" />
      </nav>
      <BottomNav />
    </div>
  );
}
